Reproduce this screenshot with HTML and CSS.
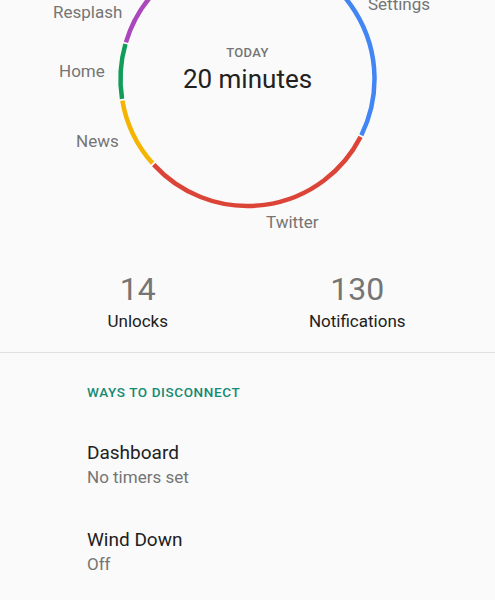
FILE: index.html
```html
<!DOCTYPE html>
<html>
<head>
    <title>Digital Wellbeing</title>
    <link rel="stylesheet" href="styles.css">
</head>
<body>
    <div id="container_main">
        <svg class="chart" width="495" height="240" viewBox="0 0 495 240">
            <!-- usage ring, one arc per app -->
            <path class="arc arc_blue" d="M247.5 -48 A127 127 0 0 1 361.36 135.27"/>
            <path class="arc arc_red" d="M360.56 136.86 A127 127 0 0 1 153.72 164.64"/>
            <path class="arc arc_yellow" d="M152.53 163.32 A127 127 0 0 1 122.35 100.62"/>
            <path class="arc arc_green" d="M122.06 98.87 A127 127 0 0 1 125.42 44.0"/>
            <path class="arc arc_purple" d="M125.92 42.3 A127 127 0 0 1 247.5 -48"/>

            <text class="app_label" x="53" y="18">Resplash</text>
            <text class="app_label" x="368" y="10">Settings</text>
            <text class="app_label" x="59" y="77">Home</text>
            <text class="app_label" x="76" y="147">News</text>
            <text class="app_label" x="266" y="228">Twitter</text>

            <text class="today" x="247.5" y="57">TODAY</text>
            <text class="total" x="247.5" y="88">20 minutes</text>
        </svg>

        <div id="container_stats">
            <div class="stat">
                <div class="stat_value">14</div>
                <div class="stat_name">Unlocks</div>
            </div>
            <div class="stat">
                <div class="stat_value">130</div>
                <div class="stat_name">Notifications</div>
            </div>
        </div>

        <div id="container_disconnect">
            <div class="section_title">WAYS TO DISCONNECT</div>
            <div class="item">
                <div class="item_title">Dashboard</div>
                <div class="item_summary">No timers set</div>
            </div>
            <div class="item">
                <div class="item_title">Wind Down</div>
                <div class="item_summary">Off</div>
            </div>
        </div>
    </div>
</body>
</html>
```

FILE: styles.css
```css
* {
    font-family: Roboto, 'Noto Sans', 'Liberation Sans', sans-serif;
}
body {
    margin: 0;
    background: #fafafa;
    overflow: hidden;
}
#container_main {
    width: 495px;
}
.chart {
    display: block;
}
.arc {
    fill: none;
    stroke-width: 4.5;
}
.arc_blue {
    stroke: #4285f4;
}
.arc_red {
    stroke: #db4437;
}
.arc_yellow {
    stroke: #f4b400;
}
.arc_green {
    stroke: #0f9d58;
}
.arc_purple {
    stroke: #ab47bc;
}
.app_label {
    font-size: 17px;
    fill: #757575;
}
.today {
    font-size: 13px;
    font-weight: 500;
    letter-spacing: 0.3px;
    fill: #757575;
    text-anchor: middle;
}
.total {
    font-size: 26px;
    fill: #212121;
    text-anchor: middle;
}
#container_stats {
    display: flex;
    flex-direction: row;
    padding: 31px 28px 20px 28px;
    border-bottom: 1px solid #e0e0e0;
}
.stat {
    flex: 1;
    text-align: center;
}
.stat_value {
    font-size: 32px;
    line-height: 36px;
    color: #757575;
}
.stat_name {
    margin-top: 3px;
    font-size: 17px;
    line-height: 22px;
    color: #212121;
}
#container_disconnect {
    padding: 29px 0 0 87px;
}
.section_title {
    font-size: 13.5px;
    line-height: 20px;
    font-weight: 500;
    letter-spacing: 0.6px;
    color: #138a72;
    margin-bottom: 18px;
}
.item {
    padding: 20px 0 19px 0;
}
.item_title {
    font-size: 19px;
    line-height: 26px;
    color: #212121;
}
.item_summary {
    font-size: 17px;
    line-height: 22px;
    color: #757575;
}
```
